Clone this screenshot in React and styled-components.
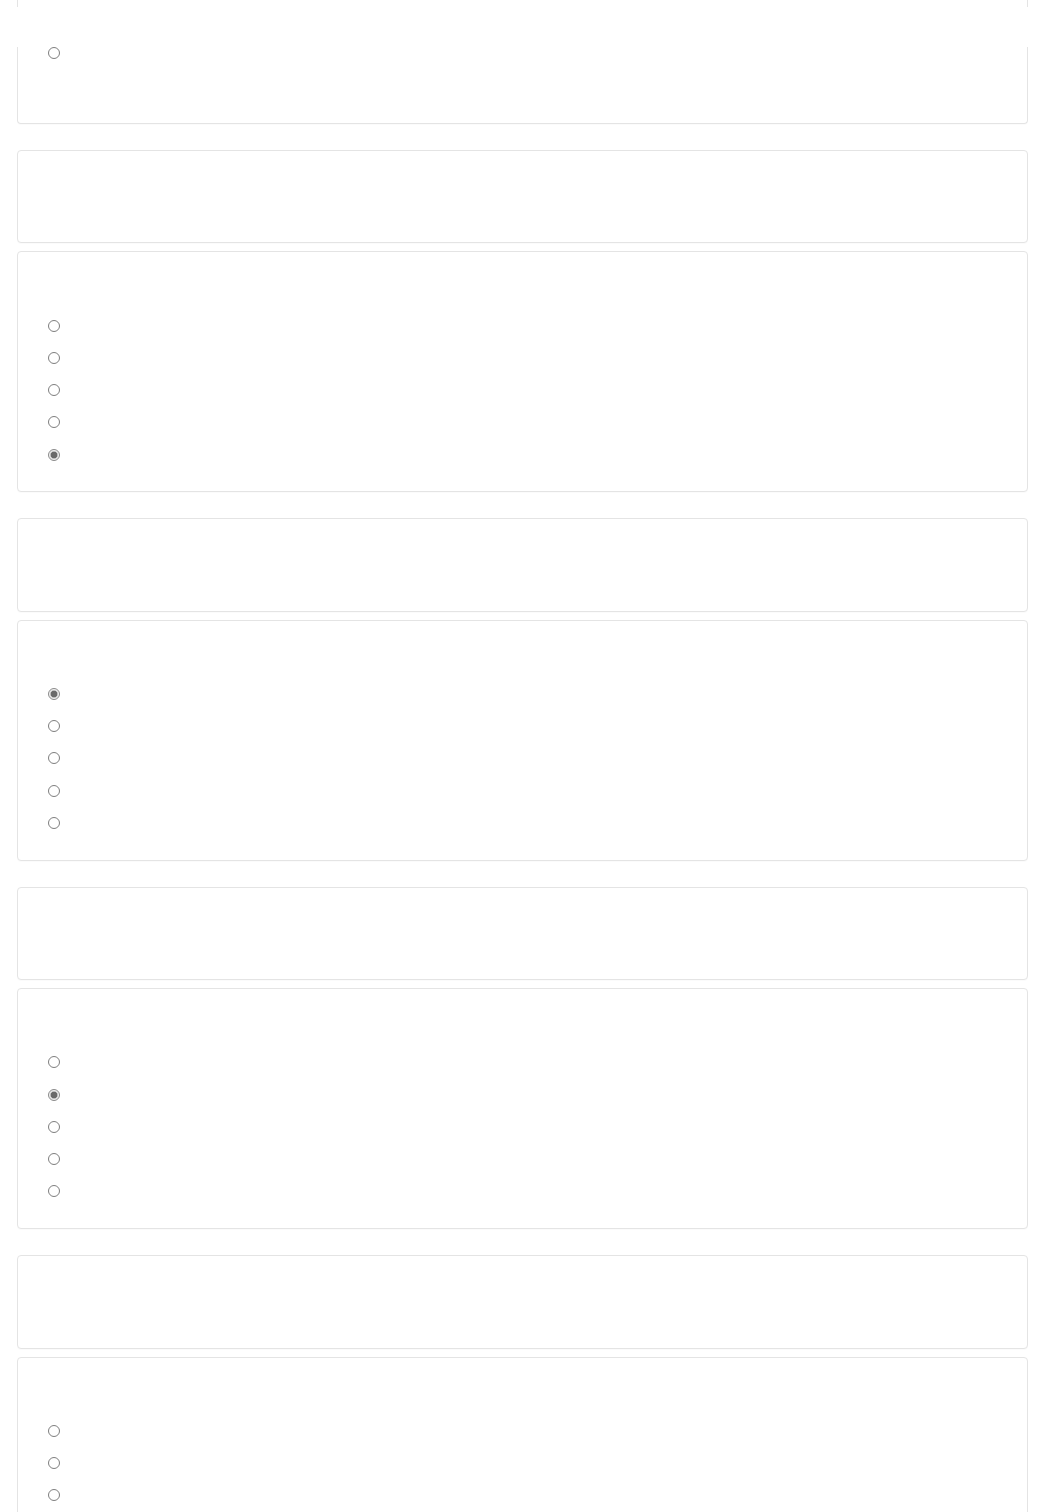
import React from "react";
import styled, { createGlobalStyle } from "styled-components";

const Global = createGlobalStyle`
  html, body { margin: 0; padding: 0; background: #ffffff; }
  body { font-family: "Liberation Sans", Arial, sans-serif; color: #333; }
`;

const TopBar = styled.div`
  position: fixed;
  top: 7px;
  left: 0;
  right: 0;
  height: 40px;
  background: #ffffff;
  z-index: 10;
`;

const Page = styled.main`
  display: flex;
  flex-direction: column;
  gap: 26px;
  margin: 0 16px 0 17px;
  padding-bottom: 40px;
`;

const Group = styled.section`
  display: flex;
  flex-direction: column;
  gap: 8px;
`;

const Card = styled.div`
  box-sizing: border-box;
  border: 1px solid #e4e4e4;
  border-radius: 4px;
  background: #fff;
  box-shadow: 0 1px 1px rgba(0, 0, 0, 0.02);
`;

const LeadCard = styled(Card)`
  height: 124px;
  border-top: none;
  border-top-left-radius: 0;
  border-top-right-radius: 0;
  padding-top: 37px;
`;

const EmptyCard = styled(Card)`
  height: 93.4px;
`;

const QuestionCard = styled(Card)`
  height: 241px;
  padding-top: 57px;
`;

const Options = styled.div`
  display: flex;
  flex-direction: column;
`;

const Option = styled.label`
  display: flex;
  align-items: center;
  height: 32.25px;
  padding-left: 29.5px;
`;

const Radio = styled.input.attrs({ type: "radio" })`
  appearance: none;
  -webkit-appearance: none;
  box-sizing: border-box;
  width: 12px;
  height: 12px;
  margin: 0;
  border: 1px solid #7e7e7e;
  border-radius: 50%;
  background: #fff;

  &:checked {
    border-color: #8a8a8a;
    background: radial-gradient(circle, #6a6a6a 0 3px, #c4c4c4 3.6px, #f2f2f2 4.5px);
  }
`;

const Text = styled.span`
  margin-left: 8px;
  font-size: 14px;
  color: transparent;
`;

const questions = [
  { id: 1, checked: 4 },
  { id: 2, checked: 0 },
  { id: 3, checked: 1 },
  { id: 4, checked: -1 },
];

export default function App() {
  return (
    <>
      <Global />
      <TopBar />
      <Page>
        <LeadCard>
          <Options>
            <Option>
              <Radio readOnly name="q0" />
              <Text />
            </Option>
          </Options>
        </LeadCard>
        {questions.map((q) => (
          <Group key={q.id}>
            <EmptyCard />
            <QuestionCard>
              <Options>
                {[0, 1, 2, 3, 4].map((i) => (
                  <Option key={i}>
                    <Radio
                      readOnly
                      name={`q${q.id}`}
                      defaultChecked={i === q.checked}
                    />
                    <Text />
                  </Option>
                ))}
              </Options>
            </QuestionCard>
          </Group>
        ))}
      </Page>
    </>
  );
}
